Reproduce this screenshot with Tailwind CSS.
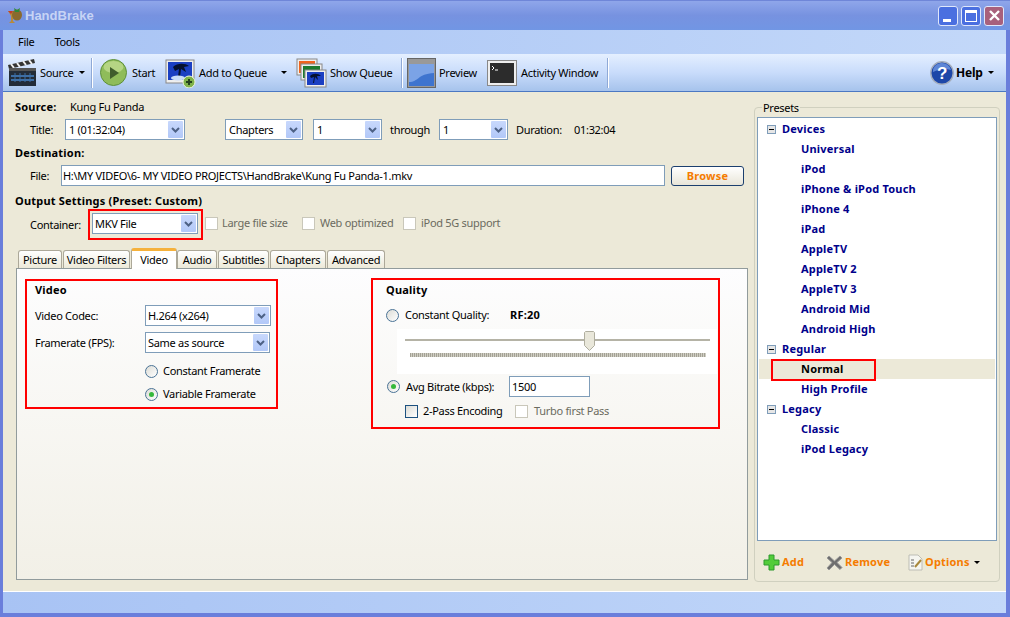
<!DOCTYPE html>
<html><head><meta charset="utf-8"><script src="https://cdn.jsdelivr.net/npm/@tailwindcss/browser@4"></script></head>
<body class="m-0 overflow-hidden">
<div class="w-[1010px] h-[617px] flex flex-col bg-[#6a7edb] text-[11px] leading-[14px] tracking-[-0.3px] whitespace-nowrap text-black [font-family:'Noto_Sans',sans-serif] overflow-hidden [&_b]:tracking-[0.2px]">
  <!-- title bar -->
  <div class="h-[30px] shrink-0 flex items-center pl-[7px] pr-[6px] bg-gradient-to-b from-[#8fa6ea] via-[#7792e0] to-[#7196e4] border-t border-[#6f86d8]">
    <svg width="15" height="17" viewBox="0 0 15 17" class="shrink-0"><path d="M1 4h7L6 9v5l2 2H2l2-2V9z" fill="#b78a3c"/><path d="M1 4h5L4 7z" fill="#c23b2a"/><ellipse cx="10" cy="8" rx="5" ry="5.500" fill="#8a6a2e"/><path d="M7 1l3 2 3-2-1 4H8z" fill="#2f8a3a"/></svg>
    <span class="ml-[3px] text-[13px] font-bold tracking-normal text-[#c7d4f5] [font-family:'Liberation_Sans',sans-serif]">HandBrake</span>
    <div class="ml-auto flex gap-[3px]">
      <div class="w-[20px] h-[20px] rounded-[3px] border border-[#dfe7fb] bg-[#4a6fe0] flex items-end justify-start pl-[4px] pb-[3px]"><div class="w-[8px] h-[3px] bg-white"></div></div>
      <div class="w-[20px] h-[20px] rounded-[3px] border border-[#dfe7fb] bg-[#4a6fe0] flex items-center justify-center"><div class="w-[12px] h-[12px] border border-white border-t-[3px]"></div></div>
      <div class="w-[20px] h-[20px] rounded-[3px] border border-[#dfe7fb] bg-[#a8607c] flex items-center justify-center"><svg width="13" height="13" viewBox="0 0 13 13"><path d="M2 2l9 9M11 2l-9 9" stroke="#fff" stroke-width="2.4"/></svg></div>
    </div>
  </div>
  <!-- body inside frame -->
  <div class="flex-1 min-h-0 ml-[3px] mr-[4px] mb-[4px] flex flex-col bg-[#ece9d8]">
    <!-- menu -->
    <div class="h-[24px] shrink-0 flex items-center gap-[20px] pl-[15px] bg-gradient-to-r from-[#a8c3f4] to-[#c3d8f9] pb-[1px]">
      <span>File</span><span>Tools</span>
    </div>
    <!-- toolbar -->
    <div class="h-[38px] shrink-0 flex items-center bg-gradient-to-b from-[#e4efff] via-[#c9dcfb] to-[#a6c3ec] border-b border-[#4b78c2] pl-[5px]">
      <svg width="30" height="30" viewBox="0 0 30 30" class="shrink-0"><rect x="1" y="11" width="27" height="17" fill="#232c38"/><path d="M0 7l26-6 1 4-26 6z" fill="#333"/><path d="M3 6l3 4M9 5l3 4M15 3l3 4M21 2l3 4" stroke="#eee" stroke-width="2"/><rect x="1" y="10" width="27" height="3" fill="#555"/><path d="M3 18h23M3 22h23" stroke="#3d6ea5" stroke-width="2"/><path d="M7 15v9M12 15v9M17 15v9M22 15v9" stroke="#3d6ea5"/></svg>
      <span class="ml-[2px] w-[34px]">Source</span>
      <span class="ml-[5px] w-0 h-0 border-x-[3px] border-x-transparent border-t-[3px] border-t-black"></span>
      <span class="ml-[6px] w-[2px] h-[30px] bg-[#8fa9d6] border-r border-white"></span>

      <svg width="27" height="27" viewBox="0 0 27 27" class="ml-[7px] shrink-0"><circle cx="13.500" cy="13.500" r="13" fill="#8fbc5a" stroke="#5d8f3a"/><ellipse cx="13.500" cy="8" rx="10" ry="6" fill="#b5d584"/><path d="M10 8l9 6-9 6z" fill="#3f5d2c"/></svg>
      <span class="ml-[5px] w-[25px]">Start</span>

      <svg width="31" height="30" viewBox="0 0 31 30" class="ml-[8px] shrink-0"><rect x="1" y="2" width="28" height="23" fill="#eee" stroke="#888"/><rect x="3" y="4" width="24" height="18" fill="#1b3fc2"/><path d="M8 9c4-4 12-4 16-1l-5 1 2 5-5-3-1 8h-2l1-8-4 2z" fill="#06112e"/><ellipse cx="13" cy="20" rx="7" ry="2.500" fill="#c9dcf8"/><circle cx="24" cy="24" r="6" fill="#7fb24a" stroke="#eef6dd"/><path d="M24 21v6M21 24h6" stroke="#24421b" stroke-width="2"/></svg>
      <span class="ml-[3px] w-[68px]">Add to Queue</span>
      <span class="ml-[14px] w-0 h-0 border-x-[3px] border-x-transparent border-t-[3px] border-t-black"></span>

      <svg width="31" height="30" viewBox="0 0 31 30" class="ml-[9px] shrink-0"><rect x="1" y="1" width="20" height="16" fill="#eee" stroke="#888"/><rect x="3" y="3" width="16" height="12" fill="#f0641e"/><rect x="5" y="6" width="21" height="16" fill="#eee" stroke="#888"/><rect x="7" y="8" width="17" height="12" fill="#1c7a2e"/><rect x="9" y="12" width="21" height="17" fill="#eee" stroke="#888"/><rect x="11" y="14" width="17" height="13" fill="#1b3fc2"/><path d="M14 18c3-3 8-3 11 0l-4 0 1 4-3-3-1 6h-1l1-6-3 1z" fill="#06112e"/></svg>
      <span class="ml-[3px] w-[62px]">Show Queue</span>
      <span class="ml-[9px] w-[2px] h-[30px] bg-[#8fa9d6] border-r border-white"></span>

      <svg width="29" height="30" viewBox="0 0 29 30" class="ml-[4px] shrink-0"><rect x=".5" y=".5" width="28" height="29" fill="#999" stroke="#666"/><rect x="2" y="6" width="25" height="22" fill="#3e74cf"/><path d="M2 24c10 0 8-8 25-9V6H2z" fill="#7ba3e6"/></svg>
      <span class="ml-[3px] w-[40px]">Preview</span>

      <svg width="30" height="26" viewBox="0 0 30 26" class="ml-[8px] shrink-0"><rect x=".5" y=".5" width="29" height="25" fill="#eee" stroke="#888"/><rect x="3" y="3" width="24" height="20" fill="#2c2c2c"/><path d="M5 6l2 2-2 2M8 10h3" stroke="#fff" fill="none"/></svg>
      <span class="ml-[4px] w-[78px]">Activity Window</span>
      <span class="ml-[8px] w-[2px] h-[30px] bg-[#8fa9d6] border-r border-white"></span>

      <svg width="24" height="24" viewBox="0 0 24 24" class="ml-[321px] shrink-0"><circle cx="12" cy="12" r="11.200" fill="#1d47a8" stroke="#a5aebd" stroke-width="1.400"/><path d="M3 11a9 8 0 0 1 18-2c-6-2-12-1-18 2z" fill="#5e86d6"/><text x="12" y="18" text-anchor="middle" font-size="17" font-weight="700" fill="#fff" font-family="Liberation Sans">?</text></svg>
      <span class="ml-[2px] font-bold text-[12px] tracking-[-0.2px] w-[28px]">Help</span>
      <span class="ml-[4px] w-0 h-0 border-x-[3px] border-x-transparent border-t-[3px] border-t-black"></span>
    </div>
    <!-- content -->
    <div class="flex-1 min-h-0 flex">
      <div class="w-[744px] shrink-0 pl-[12px] flex flex-col">
        <div class="h-[20px] mt-[5px] flex items-center"><b class="w-[55px]">Source:</b><span>Kung Fu Panda</span></div>
        <div class="h-[21px] mt-[2px] flex items-center pl-[15px]">
          <span class="w-[35px]">Title:</span>
          <div class="w-[120px] h-[21px] bg-white border border-[#7f9db9] flex items-center justify-between pl-[3px] pr-[1px]"><span>1 (01:32:04)</span><span class="w-[15px] h-[17px] bg-gradient-to-b from-[#c8d8fc] to-[#b2c8f8] rounded-[1px] flex items-center justify-center"><svg width="9" height="6" viewBox="0 0 9 6"><path d="M1 1l3.500 3.500L8 1" fill="none" stroke="#4d6185" stroke-width="2"/></svg></span></div>
          <div class="ml-[40px] w-[78px] h-[21px] bg-white border border-[#7f9db9] flex items-center justify-between pl-[3px] pr-[1px]"><span>Chapters</span><span class="w-[15px] h-[17px] bg-gradient-to-b from-[#c8d8fc] to-[#b2c8f8] rounded-[1px] flex items-center justify-center"><svg width="9" height="6" viewBox="0 0 9 6"><path d="M1 1l3.500 3.500L8 1" fill="none" stroke="#4d6185" stroke-width="2"/></svg></span></div>
          <div class="ml-[10px] w-[69px] h-[21px] bg-white border border-[#7f9db9] flex items-center justify-between pl-[3px] pr-[1px]"><span>1</span><span class="w-[15px] h-[17px] bg-gradient-to-b from-[#c8d8fc] to-[#b2c8f8] rounded-[1px] flex items-center justify-center"><svg width="9" height="6" viewBox="0 0 9 6"><path d="M1 1l3.500 3.500L8 1" fill="none" stroke="#4d6185" stroke-width="2"/></svg></span></div>
          <span class="ml-[8px] w-[49px]">through</span>
          <div class="w-[69px] h-[21px] bg-white border border-[#7f9db9] flex items-center justify-between pl-[3px] pr-[1px]"><span>1</span><span class="w-[15px] h-[17px] bg-gradient-to-b from-[#c8d8fc] to-[#b2c8f8] rounded-[1px] flex items-center justify-center"><svg width="9" height="6" viewBox="0 0 9 6"><path d="M1 1l3.500 3.500L8 1" fill="none" stroke="#4d6185" stroke-width="2"/></svg></span></div>
          <span class="ml-[8px] w-[58px]">Duration:</span><span>01:32:04</span>
        </div>
        <div class="h-[14px] mt-[6px] flex items-center"><b>Destination:</b></div>
        <div class="h-[21px] mt-[5px] flex items-center pl-[15px]">
          <span class="w-[31px]">File:</span>
          <div class="w-[604px] h-[21px] bg-white border border-[#7f9db9] flex items-center pl-[1px] overflow-hidden">H:\MY VIDEO\6- MY VIDEO PROJECTS\HandBrake\Kung Fu Panda-1.mkv</div>
          <div class="ml-[6px] w-[73px] h-[20px] rounded-[3px] border border-[#1b3f6e] bg-gradient-to-b from-white to-[#e8e5d8] text-[#f57c00] font-bold tracking-[0.2px] flex items-center justify-center">Browse</div>
        </div>
        <div class="h-[14px] mt-[8px] flex items-center"><b>Output Settings (Preset: Custom)</b></div>
        <div class="h-[31px] mt-[1px] flex items-center pl-[15px]">
          <span class="w-[58px]">Container:</span>
          <div class="w-[115px] h-[31px] border-[2px] border-[#f00] p-[2px] pr-[3px]">
            <div class="h-[21px] bg-white border border-[#7f9db9] flex items-center justify-between pl-[2px] pr-[1px]"><span>MKV File</span><span class="w-[15px] h-[17px] bg-gradient-to-b from-[#c8d8fc] to-[#b2c8f8] rounded-[1px] flex items-center justify-center"><svg width="9" height="6" viewBox="0 0 9 6"><path d="M1 1l3.500 3.500L8 1" fill="none" stroke="#4d6185" stroke-width="2"/></svg></span></div>
          </div>
          <span class="ml-[2px] mb-[3px] w-[13px] h-[13px] bg-white border border-[#c9c7ba]"></span><span class="ml-[4px] mb-[3px] w-[80px] text-[#6b6b60]">Large file size</span>
          <span class="mb-[3px] w-[13px] h-[13px] bg-white border border-[#c9c7ba]"></span><span class="ml-[5px] mb-[3px] w-[83px] text-[#6b6b60]">Web optimized</span>
          <span class="mb-[3px] w-[13px] h-[13px] bg-white border border-[#c9c7ba]"></span><span class="ml-[5px] mb-[3px] text-[#6b6b60]">iPod 5G support</span>
        </div>
        <!-- tabs -->
        <div class="h-[21px] mt-[8px] ml-[3px] flex items-end relative z-10 -mb-[1px]">
          <div class="w-[44px] h-[18px] border border-b-0 border-[#aca899] rounded-t-[3px] bg-gradient-to-b from-white to-[#ece9d8] flex items-center justify-center mb-[1px]">Picture</div>
          <div class="ml-[1px] w-[67px] h-[18px] border border-b-0 border-[#aca899] rounded-t-[3px] bg-gradient-to-b from-white to-[#ece9d8] flex items-center justify-center mb-[1px]">Video Filters</div>
          <div class="ml-[1px] w-[46px] h-[21px] border-x border-[#aca899] border-t-[3px] border-t-[#f5b13c] rounded-t-[3px] bg-white flex items-center justify-center">Video</div>
          <div class="w-[40px] h-[18px] border border-b-0 border-[#aca899] rounded-t-[3px] bg-gradient-to-b from-white to-[#ece9d8] flex items-center justify-center mb-[1px]">Audio</div>
          <div class="ml-[1px] w-[51px] h-[18px] border border-b-0 border-[#aca899] rounded-t-[3px] bg-gradient-to-b from-white to-[#ece9d8] flex items-center justify-center mb-[1px]">Subtitles</div>
          <div class="ml-[1px] w-[56px] h-[18px] border border-b-0 border-[#aca899] rounded-t-[3px] bg-gradient-to-b from-white to-[#ece9d8] flex items-center justify-center mb-[1px]">Chapters</div>
          <div class="ml-[1px] w-[58px] h-[18px] border border-b-0 border-[#aca899] rounded-t-[3px] bg-gradient-to-b from-white to-[#ece9d8] flex items-center justify-center mb-[1px]">Advanced</div>
        </div>
        <!-- panel -->
        <div class="ml-[1px] w-[732px] h-[312px] border border-[#919b9c] bg-gradient-to-b from-[#fdfdfe] to-[#f2f0e7] flex items-start pl-[8px] pt-[9px]">
          <!-- video group -->
          <div class="w-[253px] h-[130px] mt-[1px] border-[2px] border-[#f00] pl-[8px] pt-[2px] flex flex-col">
            <b>Video</b>
            <div class="flex items-center h-[21px] mt-[8px]"><span class="w-[110px]">Video Codec:</span>
              <div class="w-[126px] h-[21px] bg-white border border-[#7f9db9] flex items-center justify-between pl-[2px] pr-[1px]"><span>H.264 (x264)</span><span class="w-[15px] h-[17px] bg-gradient-to-b from-[#c8d8fc] to-[#b2c8f8] rounded-[1px] flex items-center justify-center"><svg width="9" height="6" viewBox="0 0 9 6"><path d="M1 1l3.500 3.500L8 1" fill="none" stroke="#4d6185" stroke-width="2"/></svg></span></div></div>
            <div class="flex items-center h-[21px] mt-[6px]"><span class="w-[110px]">Framerate (FPS):</span>
              <div class="w-[125px] h-[21px] bg-white border border-[#7f9db9] flex items-center justify-between pl-[2px] pr-[1px]"><span>Same as source</span><span class="w-[15px] h-[17px] bg-gradient-to-b from-[#c8d8fc] to-[#b2c8f8] rounded-[1px] flex items-center justify-center"><svg width="9" height="6" viewBox="0 0 9 6"><path d="M1 1l3.500 3.500L8 1" fill="none" stroke="#4d6185" stroke-width="2"/></svg></span></div></div>
            <div class="flex items-center h-[14px] mt-[11px] pl-[110px]"><span class="w-[13px] h-[13px] rounded-full border border-[#4a7396] bg-gradient-to-br from-[#dcdcd6] to-white"></span><span class="ml-[5px]">Constant Framerate</span></div>
            <div class="flex items-center h-[14px] mt-[9px] pl-[110px]"><span class="w-[13px] h-[13px] rounded-full border border-[#4a7396] bg-gradient-to-br from-[#dcdcd6] to-white flex items-center justify-center"><span class="w-[5px] h-[5px] rounded-full bg-[#35b83b]"></span></span><span class="ml-[5px]">Variable Framerate</span></div>
          </div>
          <!-- quality group -->
          <div class="ml-[93px] w-[349px] h-[151px] border-[2px] border-[#f00] flex flex-col pl-[13px] pt-[3px]">
            <b>Quality</b>
            <div class="flex items-center h-[14px] mt-[11px]"><span class="w-[13px] h-[13px] rounded-full border border-[#4a7396] bg-gradient-to-br from-[#dcdcd6] to-white"></span><span class="ml-[6px] w-[105px]">Constant Quality:</span><b>RF:20</b></div>
            <div class="relative ml-[11px] mt-[7px] w-[320px] h-[45px] bg-white shrink-0">
              <div class="absolute left-[8px] top-[10px] w-[305px] h-[2px] bg-[#b5b3a6]"></div>
              <div class="absolute left-[13px] top-[24px] w-[296px] h-[4px] bg-[repeating-linear-gradient(90deg,#a3a195_0,#a3a195_1px,#d0cec3_1px,#d0cec3_2px)]"></div>
              <svg class="absolute left-[187px] top-[2px]" width="11" height="21" viewBox="0 0 11 21"><path d="M.5 1.500l1-1h8l1 1v13l-5 5-5-5z" fill="#e9e7da" stroke="#b0ae9f"/></svg>
            </div>
            <div class="flex items-center h-[21px] mt-[2px] pl-[1px]"><span class="w-[13px] h-[13px] rounded-full border border-[#4a7396] bg-gradient-to-br from-[#dcdcd6] to-white flex items-center justify-center"><span class="w-[5px] h-[5px] rounded-full bg-[#35b83b]"></span></span><span class="ml-[6px] w-[103px]">Avg Bitrate (kbps):</span><div class="w-[81px] h-[21px] bg-white border border-[#7f9db9] flex items-center pl-[2px]">1500</div></div>
            <div class="flex items-center h-[14px] mt-[7px] pl-[19px]"><span class="w-[13px] h-[13px] border border-[#1c5180] bg-gradient-to-br from-[#dcdcd6] to-white"></span><span class="ml-[5px] w-[92px]">2-Pass Encoding</span><span class="w-[13px] h-[13px] bg-white border border-[#c9c7ba]"></span><span class="ml-[6px] text-[#6b6b60]">Turbo first Pass</span></div>
          </div>
        </div>
      </div>
      <!-- presets -->
      <div class="w-[256px] shrink-0 pl-[7px] pt-[8px] relative">
        <div class="w-[246px] h-[475px] mt-[7px] border border-[#d0d0bf] rounded-[4px] pl-[2px] pt-[9px] relative">
          <span class="absolute left-[7px] -top-[7px] bg-[#ece9d8] px-[1px]">Presets</span>
          <div class="w-[240px] h-[424px] bg-white border border-[#7f9db9] pt-[1px] flex flex-col font-bold tracking-[0.2px] text-[#00008b] [&>div]:h-[20px] [&>div]:shrink-0 [&>div]:flex [&>div]:items-center">
            <div class="pl-[9px]"><span class="w-[9px] h-[9px] border border-[#7f9db9] bg-[#e6e6e6] flex items-center justify-center"><span class="w-[5px] h-[1px] bg-black"></span></span><span class="ml-[6px]">Devices</span></div>
            <div class="pl-[43px]">Universal</div>
            <div class="pl-[43px]">iPod</div>
            <div class="pl-[43px]">iPhone &amp; iPod Touch</div>
            <div class="pl-[43px]">iPhone 4</div>
            <div class="pl-[43px]">iPad</div>
            <div class="pl-[43px]">AppleTV</div>
            <div class="pl-[43px]">AppleTV 2</div>
            <div class="pl-[43px]">AppleTV 3</div>
            <div class="pl-[43px]">Android Mid</div>
            <div class="pl-[43px]">Android High</div>
            <div class="pl-[9px]"><span class="w-[9px] h-[9px] border border-[#7f9db9] bg-[#e6e6e6] flex items-center justify-center"><span class="w-[5px] h-[1px] bg-black"></span></span><span class="ml-[6px]">Regular</span></div>
            <div class="pl-[43px] bg-[#ece9d8] text-black mx-[1px] relative"><span class="-ml-[1px]">Normal</span><span class="absolute left-[12px] top-0 w-[105px] h-[22px] border-[2px] border-[#f00]"></span></div>
            <div class="pl-[43px]">High Profile</div>
            <div class="pl-[9px]"><span class="w-[9px] h-[9px] border border-[#7f9db9] bg-[#e6e6e6] flex items-center justify-center"><span class="w-[5px] h-[1px] bg-black"></span></span><span class="ml-[6px]">Legacy</span></div>
            <div class="pl-[43px]">Classic</div>
            <div class="pl-[43px]">iPod Legacy</div>
          </div>
          <div class="flex items-center mt-[11px] pl-[6px] h-[20px] font-bold tracking-[0.2px] text-[#f57c00]">
            <svg width="17" height="17" viewBox="0 0 17 17" class="shrink-0"><path d="M6 1h5v5h5v5h-5v5H6v-5H1V6h5z" fill="#52cc3a" stroke="#2c9a2c"/></svg>
            <span class="ml-[2px] w-[44px]">Add</span>
            <svg width="17" height="17" viewBox="0 0 17 17" class="shrink-0"><path d="M3 2l5.500 5L14 2l2 2-5 4.500 5 5-2 2-5.500-5L3 16l-2-2 5-5.500L1 4z" fill="#6e6e6e" stroke="#9a9a9a"/></svg>
            <span class="ml-[2px] w-[63px]">Remove</span>
            <svg width="16" height="17" viewBox="0 0 16 17" class="shrink-0"><path d="M1 1h9l4 4v11H1z" fill="#f5f5f0" stroke="#bdbdb5"/><path d="M3 6h3M3 9h3M3 12h3" stroke="#666"/><path d="M7 13l6-7" stroke="#a8883c" stroke-width="2"/></svg>
            <span class="ml-[1px] w-[49px]">Options</span>
            <span class="w-0 h-0 border-x-[3px] border-x-transparent border-t-[3px] border-t-black"></span>
          </div>
        </div>
      </div>
    </div>
    <!-- status -->
    <div class="h-[22px] shrink-0 border-t border-white bg-gradient-to-r from-[#a8c3f4] to-[#c3d8f9]"></div>
  </div>
</div>
</body></html>
